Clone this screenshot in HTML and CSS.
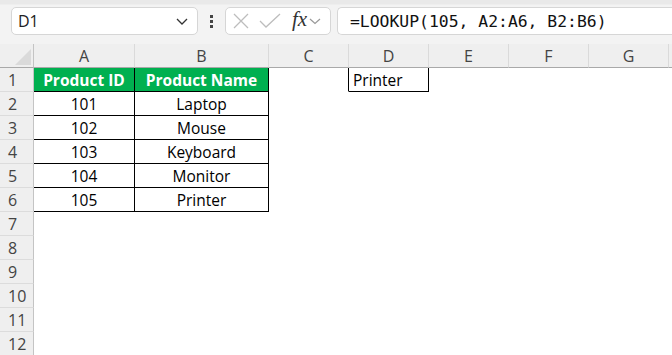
FILE: index.html
```html
<!DOCTYPE html>
<html lang="en">
<head>
    <meta charset="UTF-8">
    <title>LOOKUP - Excel</title>
    <link rel="stylesheet" href="styles.css">
</head>
<body>
    <div class="toolbar">
        <div class="name-box">
            <span>D1</span>
            <svg width="14" height="10" viewBox="0 0 14 10"><path d="M2 3 L7 8 L12 3" fill="none" stroke="#333" stroke-width="1.3"/></svg>
        </div>
        <div class="dots"><i></i><i></i><i></i></div>
        <div class="fx-box">
            <svg width="18" height="18" viewBox="0 0 18 18"><path d="M2 2 L16 16 M16 2 L2 16" stroke="#bdbdbd" stroke-width="1.3"/></svg>
            <svg width="22" height="18" viewBox="0 0 22 18"><path d="M1 9 L7 15 L21 2" fill="none" stroke="#bdbdbd" stroke-width="1.3"/></svg>
            <span class="fx">fx</span>
            <svg width="12" height="8" viewBox="0 0 12 8"><path d="M1 2 L6 6.5 L11 2" fill="none" stroke="#999" stroke-width="1.2"/></svg>
        </div>
        <div class="formula-box">=LOOKUP(105, A2:A6, B2:B6)</div>
    </div>

    <div class="sheet">
        <div class="corner"><span class="tri"></span></div>
        <div class="col-head">A</div>
        <div class="col-head">B</div>
        <div class="col-head">C</div>
        <div class="col-head">D</div>
        <div class="col-head">E</div>
        <div class="col-head">F</div>
        <div class="col-head">G</div>
        <div class="col-head last"></div>

        <div class="row-head">1</div>
        <div class="cell head b">Product ID</div>
        <div class="cell head b">Product Name</div>
        <div class="cell br"></div>
        <div class="cell b left">Printer</div>
        <div class="cell"></div><div class="cell"></div><div class="cell"></div><div class="cell"></div>

        <div class="row-head">2</div>
        <div class="cell b">101</div>
        <div class="cell b">Laptop</div>
        <div class="cell"></div><div class="cell"></div><div class="cell"></div><div class="cell"></div><div class="cell"></div><div class="cell"></div>

        <div class="row-head">3</div>
        <div class="cell b">102</div>
        <div class="cell b">Mouse</div>
        <div class="cell"></div><div class="cell"></div><div class="cell"></div><div class="cell"></div><div class="cell"></div><div class="cell"></div>

        <div class="row-head">4</div>
        <div class="cell b">103</div>
        <div class="cell b">Keyboard</div>
        <div class="cell"></div><div class="cell"></div><div class="cell"></div><div class="cell"></div><div class="cell"></div><div class="cell"></div>

        <div class="row-head">5</div>
        <div class="cell b">104</div>
        <div class="cell b">Monitor</div>
        <div class="cell"></div><div class="cell"></div><div class="cell"></div><div class="cell"></div><div class="cell"></div><div class="cell"></div>

        <div class="row-head">6</div>
        <div class="cell b">105</div>
        <div class="cell b">Printer</div>
        <div class="cell"></div><div class="cell"></div><div class="cell"></div><div class="cell"></div><div class="cell"></div><div class="cell"></div>

        <div class="row-head">7</div>
        <div class="cell"></div><div class="cell"></div><div class="cell"></div><div class="cell"></div><div class="cell"></div><div class="cell"></div><div class="cell"></div><div class="cell"></div>
        <div class="row-head">8</div>
        <div class="cell"></div><div class="cell"></div><div class="cell"></div><div class="cell"></div><div class="cell"></div><div class="cell"></div><div class="cell"></div><div class="cell"></div>
        <div class="row-head">9</div>
        <div class="cell"></div><div class="cell"></div><div class="cell"></div><div class="cell"></div><div class="cell"></div><div class="cell"></div><div class="cell"></div><div class="cell"></div>
        <div class="row-head">10</div>
        <div class="cell"></div><div class="cell"></div><div class="cell"></div><div class="cell"></div><div class="cell"></div><div class="cell"></div><div class="cell"></div><div class="cell"></div>
        <div class="row-head">11</div>
        <div class="cell"></div><div class="cell"></div><div class="cell"></div><div class="cell"></div><div class="cell"></div><div class="cell"></div><div class="cell"></div><div class="cell"></div>
        <div class="row-head">12</div>
        <div class="cell"></div><div class="cell"></div><div class="cell"></div><div class="cell"></div><div class="cell"></div><div class="cell"></div><div class="cell"></div><div class="cell"></div>
    </div>
</body>
</html>
```

FILE: styles.css
```css
body {
    margin: 0;
    font-family: "Open Sans", "Liberation Sans", sans-serif;
    background: #ffffff;
    overflow: hidden;
}

.toolbar {
    height: 44px;
    box-sizing: border-box;
    background: linear-gradient(to bottom, #e9e9e9 0, #e9e9e9 4px, #f3f3f3 5px);
    padding: 7px 0 0 11px;
    display: flex;
    align-items: flex-start;
}

.name-box, .fx-box, .formula-box {
    height: 28px;
    box-sizing: border-box;
    background: #ffffff;
    border: 1px solid #d6d6d6;
    border-radius: 5px;
    display: flex;
    align-items: center;
}

.name-box {
    width: 187px;
    padding: 0 8px 0 6px;
    justify-content: space-between;
    font-size: 16px;
    color: #222;
}

.dots {
    width: 27px;
    height: 28px;
    display: flex;
    flex-direction: column;
    align-items: center;
    justify-content: center;
    gap: 2px;
}

.dots i {
    width: 3px;
    height: 3px;
    background: #444;
}

.fx-box {
    width: 106px;
    padding: 0 4px 0 6px;
    gap: 9px;
}

.fx {
    font-family: "Liberation Serif", serif;
    font-style: italic;
    font-size: 21px;
    color: #333;
    margin-left: 2px;
    margin-right: -7px;
    margin-top: -3px;
}

.formula-box {
    flex: 1;
    margin-left: 6px;
    border-right: none;
    border-radius: 5px 0 0 5px;
    padding-left: 12px;
    font-family: "DejaVu Sans Mono", "Liberation Mono", monospace;
    font-size: 16.4px;
    color: #111;
}

.sheet {
    display: grid;
    grid-template-columns: 34px 101px 134px 80px 80px 80px 80px 80px 1fr;
    grid-auto-rows: 24px;
}

.corner, .col-head, .row-head {
    background: #efefef;
    box-sizing: border-box;
    color: #444;
    font-size: 16px;
    display: flex;
    align-items: center;
    justify-content: center;
}

.corner {
    border-right: 1px solid #c4c4c4;
    border-bottom: 1px solid #a9a9a9;
    position: relative;
}

.tri {
    position: absolute;
    right: 2px;
    bottom: 2px;
    width: 0;
    height: 0;
    border-left: 16px solid transparent;
    border-bottom: 16px solid #dadada;
}

.col-head {
    border-right: 1px solid #dadada;
    border-bottom: 1px solid #a9a9a9;
}

.col-head.last {
    border-right: none;
}

.row-head {
    border-right: 1px solid #c4c4c4;
    border-bottom: 1px solid #dcdcdc;
    justify-content: flex-start;
    padding-left: 8px;
}

.cell {
    box-sizing: border-box;
    border-right: 1px solid transparent;
    border-bottom: 1px solid transparent;
    font-size: 15.5px;
    color: #000;
    display: flex;
    align-items: center;
    justify-content: center;
}

.cell.b {
    border-right-color: #000;
    border-bottom-color: #000;
}

.cell.br {
    border-right-color: #000;
}

.cell.left {
    justify-content: flex-start;
    padding-left: 4px;
}

.cell.head {
    background: #00b050;
    color: #ffffff;
    font-weight: bold;
}
```
